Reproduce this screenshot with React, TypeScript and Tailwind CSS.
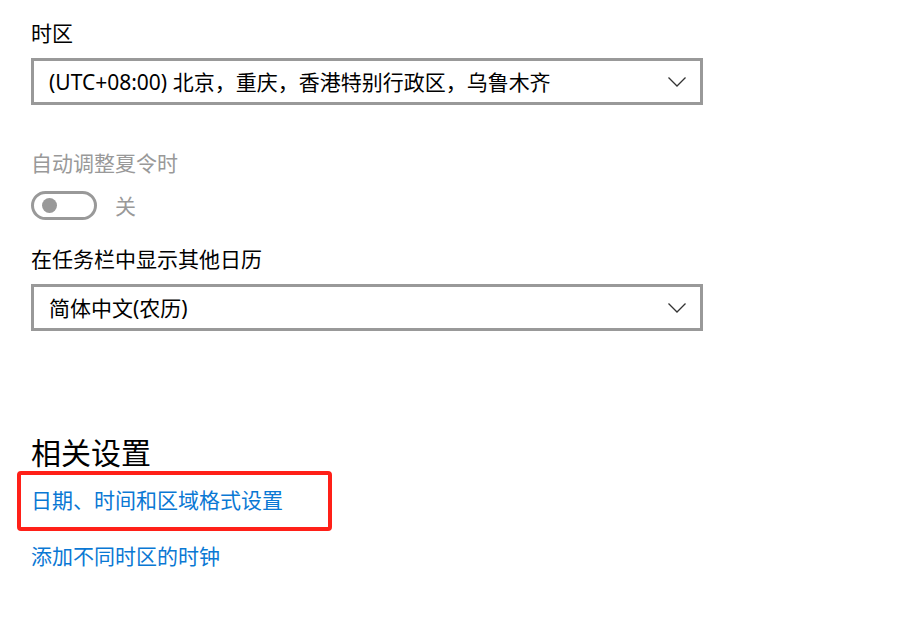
const font = { fontFamily: '"Noto Sans", "Noto Sans CJK SC", sans-serif' };

function Chevron() {
  return (
    <svg width="20" height="12" viewBox="0 0 20 12" fill="none" className="shrink-0">
      <path d="M1.5 1.5 L10 10 L18.5 1.5" stroke="#333" strokeWidth="1.3" />
    </svg>
  );
}

function Select({ value }: { value: string }) {
  return (
    <div className="flex h-[47px] w-[672px] items-center justify-between border-[3px] border-[#999999] bg-white pl-[15px] pr-[13px]">
      <span className="text-[21px] leading-[28px] text-black">{value}</span>
      <Chevron />
    </div>
  );
}

export default function App() {
  return (
    <div className="min-h-screen w-full bg-white pl-[31px] pt-[19px]" style={font}>
      <div className="text-[21px] leading-[28px] text-black">时区</div>
      <div className="mt-[11px]">
        <Select value="(UTC+08:00) 北京，重庆，香港特别行政区，乌鲁木齐" />
      </div>

      <div className="mt-[44px] text-[21px] leading-[28px] text-[#999999]">自动调整夏令时</div>
      <div className="mt-[14px] flex items-center gap-[18px]">
        <div className="flex h-[29px] w-[66px] items-center rounded-full border-[3px] border-[#999999] pl-[8px]">
          <div className="h-[15px] w-[15px] rounded-full bg-[#999999]" />
        </div>
        <span className="text-[21px] leading-[28px] text-[#999999]">关</span>
      </div>

      <div className="mt-[25px] text-[21px] leading-[28px] text-black">在任务栏中显示其他日历</div>
      <div className="mt-[11px]">
        <Select value="简体中文(农历)" />
      </div>

      <h2 className="mt-[102px] text-[30px] leading-[40px] text-black">相关设置</h2>
      <div className="relative mt-[13px] w-fit">
        <a className="block text-[21px] leading-[28px] text-[#0a78d4]">日期、时间和区域格式设置</a>
        <div className="pointer-events-none absolute -left-[14px] -top-[15px] h-[60px] w-[315px] rounded-[4px] border-4 border-[#ff2018]" />
      </div>
      <a className="mt-[28px] block text-[21px] leading-[28px] text-[#0a78d4]">添加不同时区的时钟</a>
    </div>
  );
}
